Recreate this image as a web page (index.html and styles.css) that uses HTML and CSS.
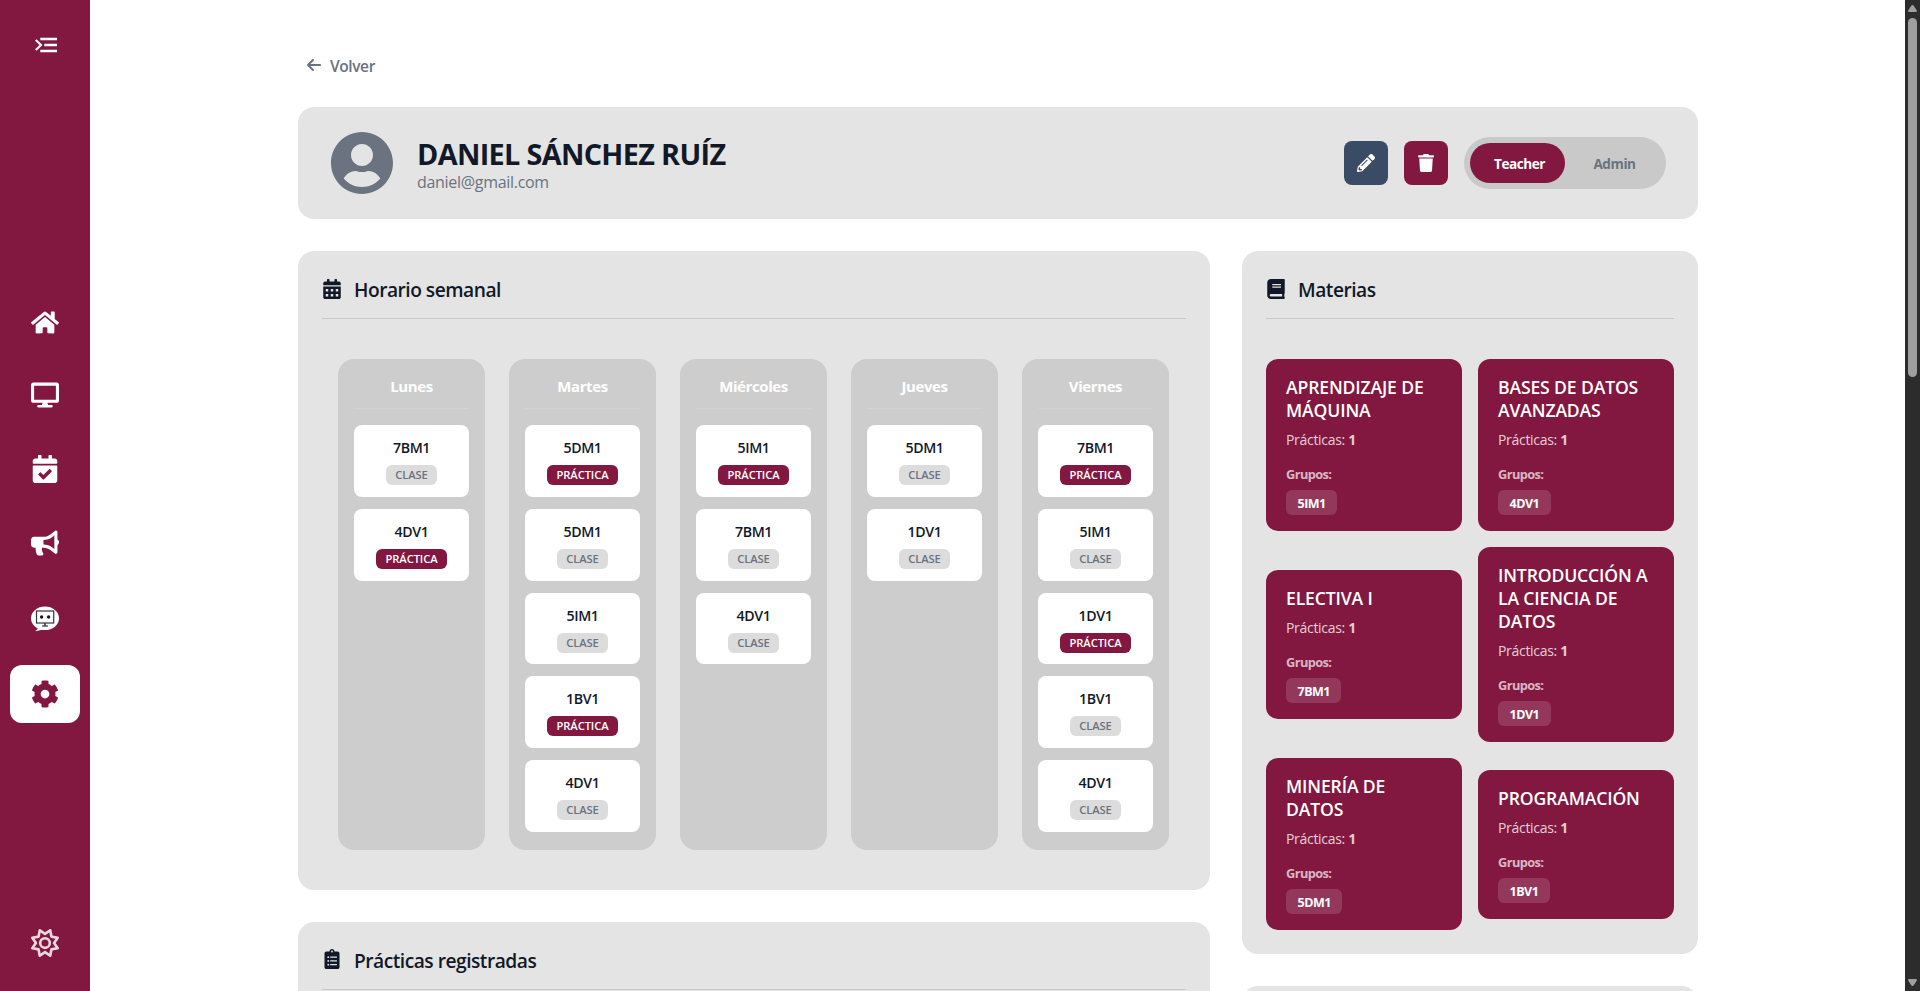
FILE: index.html
```html
<!DOCTYPE html>
<html lang="es">
<head>
<meta charset="utf-8">
<title>Docente</title>
<link rel="stylesheet" href="styles.css">
</head>
<body>
<div class="app">
  <aside class="sidebar">
    <button class="menu-toggle" aria-label="Menu">
      <svg width="22" height="16" viewBox="0 0 22 16" fill="none" stroke="currentColor" stroke-width="2.1"><path d="M.8 3 6 8 .8 13"/><path stroke-width="2.3" d="M5.3 2H22M9.3 8H22M5.3 14H22"/></svg>
    </button>
    <nav class="nav">
      <a class="nav-item nav-home"><svg width="28" height="25" viewBox="0 0 576 512"><path d="M280.37 148.26L96 300.11V464a16 16 0 0 0 16 16l112.06-.29a16 16 0 0 0 15.92-16V368a16 16 0 0 1 16-16h64a16 16 0 0 1 16 16v95.64a16 16 0 0 0 16 16.05L464 480a16 16 0 0 0 16-16V300L295.67 148.26a12.19 12.19 0 0 0-15.3 0zM571.6 251.47L488 182.56V44.05a12 12 0 0 0-12-12h-56a12 12 0 0 0-12 12v72.61L318.47 43a48 48 0 0 0-61 0L4.34 251.47a12 12 0 0 0-1.6 16.9l25.5 31A12 12 0 0 0 45.15 301l235.22-193.74a12.19 12.19 0 0 1 15.3 0L530.9 301a12 12 0 0 0 16.9-1.6l25.5-31a12 12 0 0 0-1.7-16.93z"/></svg></a>
      <a class="nav-item"><svg width="28" height="28" viewBox="0 0 576 512"><path d="M528 0H48C21.5 0 0 21.5 0 48v320c0 26.5 21.5 48 48 48h192l-16 48h-72c-13.3 0-24 10.7-24 24s10.7 24 24 24h272c13.3 0 24-10.7 24-24s-10.7-24-24-24h-72l-16-48h192c26.5 0 48-21.5 48-48V48c0-26.5-21.5-48-48-48zm-16 352H64V64h448v288z"/></svg></a>
      <a class="nav-item"><svg width="28" height="28" viewBox="0 0 448 512"><path d="M436 160H12c-6.627 0-12-5.373-12-12v-36c0-26.51 21.49-48 48-48h48V12c0-6.627 5.373-12 12-12h40c6.627 0 12 5.373 12 12v52h128V12c0-6.627 5.373-12 12-12h40c6.627 0 12 5.373 12 12v52h48c26.51 0 48 21.49 48 48v36c0 6.627-5.373 12-12 12zM12 192h424c6.627 0 12 5.373 12 12v260c0 26.51-21.49 48-48 48H48c-26.51 0-48-21.49-48-48V204c0-6.627 5.373-12 12-12zm333.296 95.947l-28.169-28.398c-4.667-4.705-12.265-4.736-16.97-.068L194.12 364.665l-45.98-46.352c-4.667-4.705-12.266-4.736-16.971-.068l-28.397 28.17c-4.705 4.667-4.736 12.265-.068 16.97l82.601 83.269c4.667 4.705 12.265 4.736 16.97.068l142.953-141.805c4.705-4.667 4.736-12.265.068-16.97z"/></svg></a>
      <a class="nav-item"><svg width="28" height="28" viewBox="0 0 576 512"><path d="M576 240c0-23.63-12.95-44.04-32-55.12V32.01C544 23.26 537.02 0 512 0c-7.12 0-14.19 2.38-19.98 7.02l-85.03 68.03C364.28 109.19 310.66 128 256 128H64c-35.35 0-64 28.65-64 64v96c0 35.35 28.65 64 64 64h33.7c-1.39 10.48-2.18 21.14-2.18 32 0 39.77 9.26 77.35 25.56 110.94 5.19 10.69 16.52 17.06 28.4 17.06h74.28c26.05 0 41.69-29.84 25.9-50.56-16.4-21.52-26.15-48.36-26.15-77.44 0-11.11 1.62-21.79 4.41-32H256c54.66 0 108.28 18.81 150.98 52.95l85.03 68.03a32.023 32.023 0 0 0 19.98 7.02c24.92 0 32-22.78 32-32V295.13C563.05 284.04 576 263.63 576 240zm-96 141.42l-33.05-26.44C392.95 311.78 325.12 288 256 288v-96c69.12 0 136.95-23.78 190.95-66.98L480 98.58v282.84z"/></svg></a>
      <a class="nav-item nav-bot"><svg width="28" height="26" viewBox="0 0 28 26"><ellipse cx="14" cy="12.3" rx="14" ry="11.8"/><path d="M5.2 19 7 22.5 4.3 25.3 12.5 23.5z"/><g stroke="#33353b" fill="none"><rect x="5.5" y="5" width="17.2" height="12" stroke-width="1.2"/><path stroke-width="1.6" d="M14 17v3"/><path stroke-width="1.2" d="M11 20h6"/></g><circle cx="10.6" cy="11" r="1.7" fill="#16181d"/><circle cx="17.6" cy="11" r="1.7" fill="#16181d"/></svg></a>
      <a class="nav-item active"><svg width="28" height="28" viewBox="0 0 512 512"><path d="M487.4 315.7l-42.6-24.6c4.3-23.2 4.3-47 0-70.2l42.6-24.6c4.9-2.8 7.1-8.6 5.5-14-11.1-35.6-30-67.8-54.7-94.6-3.8-4.1-10-5.1-14.8-2.3L380.8 110c-17.9-15.4-38.5-27.3-60.8-35.1V25.8c0-5.6-3.9-10.5-9.4-11.7-36.7-8.2-74.3-7.8-109.2 0-5.5 1.2-9.4 6.1-9.4 11.7V75c-22.2 7.9-42.8 19.8-60.8 35.1L88.7 85.5c-4.9-2.8-11-1.9-14.8 2.3-24.7 26.7-43.6 58.9-54.7 94.6-1.7 5.4.6 11.2 5.5 14L67.3 221c-4.3 23.2-4.3 47 0 70.2l-42.6 24.6c-4.9 2.8-7.1 8.6-5.5 14 11.1 35.6 30 67.8 54.7 94.6 3.8 4.1 10 5.1 14.8 2.3l42.6-24.6c17.9 15.4 38.5 27.3 60.8 35.1v49.2c0 5.6 3.9 10.5 9.4 11.7 36.7 8.2 74.3 7.8 109.2 0 5.5-1.2 9.4-6.1 9.4-11.7v-49.2c22.2-7.9 42.8-19.8 60.8-35.1l42.6 24.6c4.9 2.8 11 1.9 14.8-2.3 24.7-26.7 43.6-58.9 54.7-94.6 1.5-5.5-.7-11.3-5.6-14.1zM256 336c-44.1 0-80-35.9-80-80s35.9-80 80-80 80 35.9 80 80-35.9 80-80 80z"/></svg></a>
    </nav>
    <button class="theme-toggle" aria-label="Tema">
      <svg width="28" height="28" viewBox="0 0 512 512"><path d="M375.7 19.7c-1.5-8-6.9-14.7-14.4-17.8s-16.1-2.2-22.8 2.4L256 61.1 173.5 4.2c-6.7-4.6-15.3-5.5-22.8-2.4s-12.9 9.8-14.4 17.8l-18.1 98.5L19.7 136.3c-8 1.5-14.7 6.9-17.8 14.4s-2.2 16.1 2.4 22.8L61.1 256 4.2 338.5c-4.6 6.7-5.5 15.3-2.4 22.8s9.8 13 17.8 14.4l98.5 18.1 18.1 98.5c1.5 8 6.9 14.7 14.4 17.8s16.1 2.2 22.8-2.4L256 450.9l82.5 56.9c6.7 4.6 15.3 5.5 22.8 2.4s12.9-9.8 14.4-17.8l18.1-98.5 98.5-18.1c8-1.5 14.7-6.9 17.8-14.4s2.2-16.1-2.4-22.8L450.9 256l56.9-82.5c4.6-6.7 5.5-15.3 2.4-22.8s-9.8-12.9-17.8-14.4l-98.5-18.1L375.7 19.7zM269.6 110l65.6-45.2 14.4 78.3c1.8 9.8 9.5 17.5 19.3 19.3l78.3 14.4L402 242.4c-5.7 8.2-5.7 19 0 27.2l45.2 65.6-78.3 14.4c-9.8 1.8-17.5 9.5-19.3 19.3l-14.4 78.3L269.6 402c-8.2-5.7-19-5.7-27.2 0l-65.6 45.2-14.4-78.3c-1.8-9.8-9.5-17.5-19.3-19.3L64.8 335.2 110 269.6c5.7-8.2 5.7-19 0-27.2L64.8 176.8l78.3-14.4c9.8-1.8 17.5-9.5 19.3-19.3l14.4-78.3L242.4 110c8.2 5.7 19 5.7 27.2 0zM256 368a112 112 0 1 0 0-224 112 112 0 1 0 0 224zM192 256a64 64 0 1 1 128 0 64 64 0 1 1 -128 0z"/></svg>
    </button>
  </aside>

  <main class="main">
    <a class="back"><svg width="16" height="16" viewBox="0 0 448 512"><path d="M9.4 233.4c-12.5 12.5-12.5 32.8 0 45.3l160 160c12.5 12.5 32.8 12.5 45.3 0s12.5-32.8 0-45.3L109.2 288 416 288c17.7 0 32-14.3 32-32s-14.3-32-32-32l-306.7 0L214.6 118.6c12.5-12.5 12.5-32.8 0-45.3s-32.8-12.5-45.3 0l-160 160z"/></svg><span>Volver</span></a>

    <header class="card profile">
      <svg class="avatar" width="64" height="64" viewBox="0 0 496 512"><path d="M248 8C111 8 0 119 0 256s111 248 248 248 248-111 248-248S385 8 248 8zm0 96c48.6 0 88 39.4 88 88s-39.4 88-88 88-88-39.4-88-88 39.4-88 88-88zm0 344c-58.7 0-111.3-26.6-146.5-68.2 18.8-35.4 55.6-59.8 98.5-59.8 2.4 0 4.8.4 7.1 1.1 13 4.2 26.6 6.9 40.9 6.9 14.3 0 28-2.7 40.9-6.9 2.3-.7 4.7-1.1 7.1-1.1 42.9 0 79.7 24.4 98.5 59.8C359.3 421.4 306.7 448 248 448z"/></svg>
      <div class="identity">
        <h1 class="name">DANIEL SÁNCHEZ RUÍZ</h1>
        <p class="email">daniel@gmail.com</p>
      </div>
      <div class="actions">
        <button class="icon-btn edit" aria-label="Editar"><svg width="18" height="18" viewBox="0 0 512 512"><path d="M497.9 142.1l-46.1 46.1c-4.7 4.7-12.3 4.7-17 0l-111-111c-4.7-4.7-4.7-12.3 0-17l46.1-46.1c18.7-18.7 49.1-18.7 67.9 0l60.1 60.1c18.8 18.7 18.8 49.1 0 67.9zM284.2 99.8L21.6 362.4.4 483.9c-2.9 16.4 11.4 30.6 27.8 27.8l121.5-21.3 262.6-262.6c4.7-4.7 4.7-12.3 0-17l-111-111c-4.8-4.7-12.4-4.7-17.1 0zM124.1 339.9c-5.5-5.5-5.5-14.3 0-19.8l154-154c5.5-5.5 14.3-5.5 19.8 0s5.5 14.3 0 19.8l-154 154c-5.5 5.5-14.3 5.5-19.8 0zM88 424h48v36.3l-64.5 11.3-31.1-31.1L51.7 376H88v48z"/></svg></button>
        <button class="icon-btn delete" aria-label="Eliminar"><svg width="18" height="18" viewBox="0 0 448 512"><path d="M432 32H312l-9.4-18.7A24 24 0 0 0 281.1 0H166.8a23.72 23.72 0 0 0-21.4 13.3L136 32H16A16 16 0 0 0 0 48v32a16 16 0 0 0 16 16h416a16 16 0 0 0 16-16V48a16 16 0 0 0-16-16zM53.2 467a48 48 0 0 0 47.9 45h245.8a48 48 0 0 0 47.9-45L416 128H32z"/></svg></button>
        <div class="role-switch"><span class="role selected">Teacher</span><span class="role">Admin</span></div>
      </div>
    </header>

    <div class="columns">
      <div class="stack">
        <section class="card panel">
          <h2 class="panel-title"><svg width="20" height="20" viewBox="0 0 448 512"><path fill-rule="evenodd" d="M0 464c0 26.5 21.500 48 48 48h352c26.500 0 48-21.500 48-48V192H0zM64 256h64v64H64zM192 256h64v64h-64zM320 256h64v64h-64zM64 384h64v64H64zM192 384h64v64h-64zM320 384h64v64h-64zM400 64h-48V16c0-8.800-7.200-16-16-16h-32c-8.800 0-16 7.200-16 16v48H160V16c0-8.800-7.200-16-16-16h-32c-8.800 0-16 7.200-16 16v48H48C21.500 64 0 85.500 0 112v48h448v-48c0-26.500-21.500-48-48-48z"/></svg><span>Horario semanal</span></h2>
          <div class="week">
            <div class="day"><h3 class="day-name">Lunes</h3>
              <div class="slot"><b>7BM1</b><span class="tag">CLASE</span></div>
              <div class="slot"><b>4DV1</b><span class="tag lab">PRÁCTICA</span></div></div>
            <div class="day"><h3 class="day-name">Martes</h3>
              <div class="slot"><b>5DM1</b><span class="tag lab">PRÁCTICA</span></div>
              <div class="slot"><b>5DM1</b><span class="tag">CLASE</span></div>
              <div class="slot"><b>5IM1</b><span class="tag">CLASE</span></div>
              <div class="slot"><b>1BV1</b><span class="tag lab">PRÁCTICA</span></div>
              <div class="slot"><b>4DV1</b><span class="tag">CLASE</span></div></div>
            <div class="day"><h3 class="day-name">Miércoles</h3>
              <div class="slot"><b>5IM1</b><span class="tag lab">PRÁCTICA</span></div>
              <div class="slot"><b>7BM1</b><span class="tag">CLASE</span></div>
              <div class="slot"><b>4DV1</b><span class="tag">CLASE</span></div></div>
            <div class="day"><h3 class="day-name">Jueves</h3>
              <div class="slot"><b>5DM1</b><span class="tag">CLASE</span></div>
              <div class="slot"><b>1DV1</b><span class="tag">CLASE</span></div></div>
            <div class="day"><h3 class="day-name">Viernes</h3>
              <div class="slot"><b>7BM1</b><span class="tag lab">PRÁCTICA</span></div>
              <div class="slot"><b>5IM1</b><span class="tag">CLASE</span></div>
              <div class="slot"><b>1DV1</b><span class="tag lab">PRÁCTICA</span></div>
              <div class="slot"><b>1BV1</b><span class="tag">CLASE</span></div>
              <div class="slot"><b>4DV1</b><span class="tag">CLASE</span></div></div>
          </div>
        </section>
        <section class="card panel next">
          <h2 class="panel-title"><svg width="20" height="20" viewBox="0 0 384 512"><path fill-rule="evenodd" d="M336 64h-80c0-35.300-28.700-64-64-64s-64 28.700-64 64H48C21.500 64 0 85.500 0 112v352c0 26.500 21.500 48 48 48h288c26.500 0 48-21.500 48-48V112c0-26.500-21.500-48-48-48zM96 424a24 24 0 1 1 0-48 24 24 0 0 1 0 48zM96 328a24 24 0 1 1 0-48 24 24 0 0 1 0 48zM96 232a24 24 0 1 1 0-48 24 24 0 0 1 0 48zM192 40a24 24 0 1 1 0 48 24 24 0 0 1 0-48zM152 192h160a8 8 0 0 1 8 8v16a8 8 0 0 1-8 8H152a8 8 0 0 1-8-8v-16a8 8 0 0 1 8-8zM152 288h160a8 8 0 0 1 8 8v16a8 8 0 0 1-8 8H152a8 8 0 0 1-8-8v-16a8 8 0 0 1 8-8zM152 384h160a8 8 0 0 1 8 8v16a8 8 0 0 1-8 8H152a8 8 0 0 1-8-8v-16a8 8 0 0 1 8-8z"/></svg><span>Prácticas registradas</span></h2>
        </section>
      </div>

      <div class="stack">
        <section class="card panel">
          <h2 class="panel-title"><svg width="20" height="20" viewBox="0 0 448 512"><path d="M448 360V24c0-13.300-10.700-24-24-24H96C43 0 0 43 0 96v320c0 53 43 96 96 96h328c13.300 0 24-10.700 24-24v-16c0-7.500-3.500-14.300-8.900-18.700-4.200-15.400-4.200-59.300 0-74.700 5.400-4.300 8.900-11.100 8.900-18.600zM128 134c0-3.300 2.700-6 6-6h212c3.300 0 6 2.700 6 6v20c0 3.300-2.700 6-6 6H134c-3.300 0-6-2.700-6-6v-20zm0 64c0-3.300 2.700-6 6-6h212c3.300 0 6 2.700 6 6v20c0 3.300-2.700 6-6 6H134c-3.300 0-6-2.700-6-6v-20zm253.400 250H96c-17.700 0-32-14.300-32-32 0-17.600 14.400-32 32-32h285.400c-1.900 17.100-1.900 46.900 0 64z"/></svg><span>Materias</span></h2>
          <div class="subjects">
            <article class="subject"><h3>APRENDIZAJE DE MÁQUINA</h3><p>Prácticas: <strong>1</strong></p><h4>Grupos:</h4><span class="group">5IM1</span></article>
            <article class="subject"><h3>BASES DE DATOS AVANZADAS</h3><p>Prácticas: <strong>1</strong></p><h4>Grupos:</h4><span class="group">4DV1</span></article>
            <article class="subject"><h3>ELECTIVA I</h3><p>Prácticas: <strong>1</strong></p><h4>Grupos:</h4><span class="group">7BM1</span></article>
            <article class="subject"><h3>INTRODUCCIÓN A LA CIENCIA DE DATOS</h3><p>Prácticas: <strong>1</strong></p><h4>Grupos:</h4><span class="group">1DV1</span></article>
            <article class="subject"><h3>MINERÍA DE DATOS</h3><p>Prácticas: <strong>1</strong></p><h4>Grupos:</h4><span class="group">5DM1</span></article>
            <article class="subject"><h3>PROGRAMACIÓN</h3><p>Prácticas: <strong>1</strong></p><h4>Grupos:</h4><span class="group">1BV1</span></article>
          </div>
        </section>
        <section class="card panel next"></section>
      </div>
    </div>
  </main>

  <div class="scrollbar">
    <svg width="9" height="7" viewBox="0 0 9 7"><path d="M4.500 0Q5.300 0 5.900 1L8.700 5.300Q9.300 7 8 7H1Q-.3 7 .3 5.300L3.100 1Q3.700 0 4.500 0z"/></svg>
    <div class="thumb"></div>
    <svg class="down" width="9" height="7" viewBox="0 0 9 7"><path d="M4.500 7Q5.300 7 5.900 6L8.700 1.700Q9.300 0 8 0H1Q-.3 0 .3 1.700L3.100 6Q3.700 7 4.500 7z"/></svg>
  </div>
</div>
</body>
</html>
```
FILE: styles.css
```css
* { box-sizing: border-box; margin: 0; padding: 0; }

body {
  font-family: "Open Sans", "Noto Sans", sans-serif;
  color: #111827;
  background: #fff;
  overflow: hidden;
}

button { border: 0; background: none; font: inherit; }
svg { display: block; fill: currentColor; flex: none; }

.app { display: flex; height: 100vh; overflow: hidden; }

/* Sidebar */
.sidebar {
  width: 90px;
  flex: none;
  display: flex;
  flex-direction: column;
  align-items: center;
  padding: 37px 10px 34px;
  color: #fff;
  background: #821840;
}
.menu-toggle { color: #fff; padding-left: 1px; }
.menu-toggle svg { fill: none; }
.nav {
  width: 100%;
  margin-top: 241px;
  display: flex;
  flex-direction: column;
  gap: 16px;
}
.nav-item {
  height: 58px;
  display: flex;
  align-items: center;
  justify-content: center;
  border-radius: 12px;
}
.nav-home { height: 56px; }
.nav-bot { height: 61px; }
.nav-item.active { color: #821840; background: #fff; }
.theme-toggle { margin-top: auto; color: rgba(255, 255, 255, .83); }

/* Main */
.main { flex: 1; min-width: 0; padding: 53px 207px 0 208px; }
.back {
  display: flex;
  align-items: center;
  gap: 8px;
  height: 24px;
  padding-left: 8px;
  color: #6b7280;
  font-size: 15.500px;
  font-weight: 600;
  letter-spacing: -.4px;
}
.back span { padding-top: 1px; }

.card { background: #e4e4e4; border-radius: 16px; }

.profile {
  margin-top: 30px;
  height: 112px;
  padding: 0 32px;
  display: flex;
  align-items: center;
}
.avatar { color: #6b7280; }
.identity { margin-left: 23px; padding-top: 6px; }
.name {
  font-size: 28.800px;
  line-height: 32px;
  font-weight: 700;
  letter-spacing: -.65px;
}
.email {
  color: #6b7280;
  font-size: 16px;
  line-height: 24px;
  letter-spacing: -.3px;
}
.actions { margin-left: auto; display: flex; align-items: center; gap: 16px; }
.icon-btn {
  width: 44px;
  height: 44px;
  display: grid;
  place-items: center;
  border-radius: 8px;
  color: #fff;
}
.edit { background: #3a4b66; }
.delete { background: #821840; }
.role-switch {
  width: 202px;
  height: 52px;
  padding: 6px;
  display: flex;
  border-radius: 26px;
  background: #c9c9c9;
}
.role {
  flex: 1;
  display: grid;
  place-items: center;
  padding: 1px 0 0 4px;
  border-radius: 20px;
  color: #6b7280;
  font-size: 13.600px;
  font-weight: 700;
  letter-spacing: -.45px;
}
.role.selected { color: #fff; background: #821840; }

.columns {
  margin-top: 32px;
  display: grid;
  grid-template-columns: 2fr 1fr;
  gap: 32px;
  align-items: start;
}
.stack { display: grid; gap: 32px; }
.panel { padding: 24px; }
.next { height: 300px; }
.panel-title {
  height: 44px;
  padding-bottom: 16px;
  display: flex;
  align-items: center;
  gap: 12px;
  border-bottom: 1px solid #c9c9c9;
  font-size: 19.200px;
  font-weight: 600;
  letter-spacing: -.5px;
}
.panel-title span { padding-top: 2px; }

/* Weekly schedule */
.week {
  margin-top: 24px;
  padding: 16px;
  display: grid;
  grid-template-columns: repeat(5, 147px);
  gap: 24px;
}
.day {
  padding: 16px 16px 18px;
  border-radius: 16px;
  background: #cdcdcd;
}
.day-name {
  height: 34px;
  margin-bottom: 16px;
  border-bottom: 1px solid #d2d2d2;
  color: #fff;
  font-size: 15px;
  line-height: 23px;
  font-weight: 700;
  letter-spacing: -.4px;
  text-align: center;
}
.slot {
  height: 71.800px;
  padding-top: 11px;
  display: flex;
  flex-direction: column;
  align-items: center;
  gap: 5px;
  border-radius: 8px;
  background: #fff;
}
.slot + .slot { margin-top: 12px; }
.slot b {
  font-size: 14.200px;
  line-height: 24px;
  font-weight: 600;
  letter-spacing: -.4px;
}
.tag {
  height: 20px;
  padding: 0 9.500px;
  border-radius: 6px;
  background: #dcdcdc;
  color: #6b7280;
  font-size: 11.200px;
  line-height: 20px;
  font-weight: 600;
  letter-spacing: -.1px;
}
.tag.lab { background: #821840; color: #fff; }

/* Subjects */
.subjects {
  margin-top: 40px;
  display: grid;
  grid-template-columns: 1fr 1fr;
  gap: 16px;
  align-items: center;
}
.subject {
  padding: 17px 20px 16px;
  border-radius: 12px;
  color: #fff;
  background: #821840;
}
.subject h3 {
  font-size: 17.600px;
  line-height: 23px;
  font-weight: 600;
  letter-spacing: -.15px;
}
.subject p {
  margin-top: 7px;
  color: rgba(255, 255, 255, .8);
  font-size: 14px;
  line-height: 22px;
  letter-spacing: -.3px;
}
.subject h4 {
  margin: 13px 0 6px;
  color: rgba(255, 255, 255, .7);
  font-size: 12.800px;
  line-height: 20px;
  font-weight: 700;
  letter-spacing: -.6px;
}
.group {
  display: block;
  width: fit-content;
  height: 25px;
  padding: 0 11.500px;
  border-radius: 6px;
  background: rgba(255, 255, 255, .14);
  font-size: 12.500px;
  line-height: 27px;
  font-weight: 700;
  letter-spacing: -.5px;
}

/* Page scrollbar */
.scrollbar {
  width: 15px;
  flex: none;
  display: flex;
  flex-direction: column;
  align-items: center;
  padding: 5px 0;
  color: #9f9f9f;
  background: #2c2c2c;
}
.thumb { width: 9px; height: 359px; margin-top: 6px; border-radius: 5px; background: #9f9f9f; }
.down { margin-top: auto; }
```
